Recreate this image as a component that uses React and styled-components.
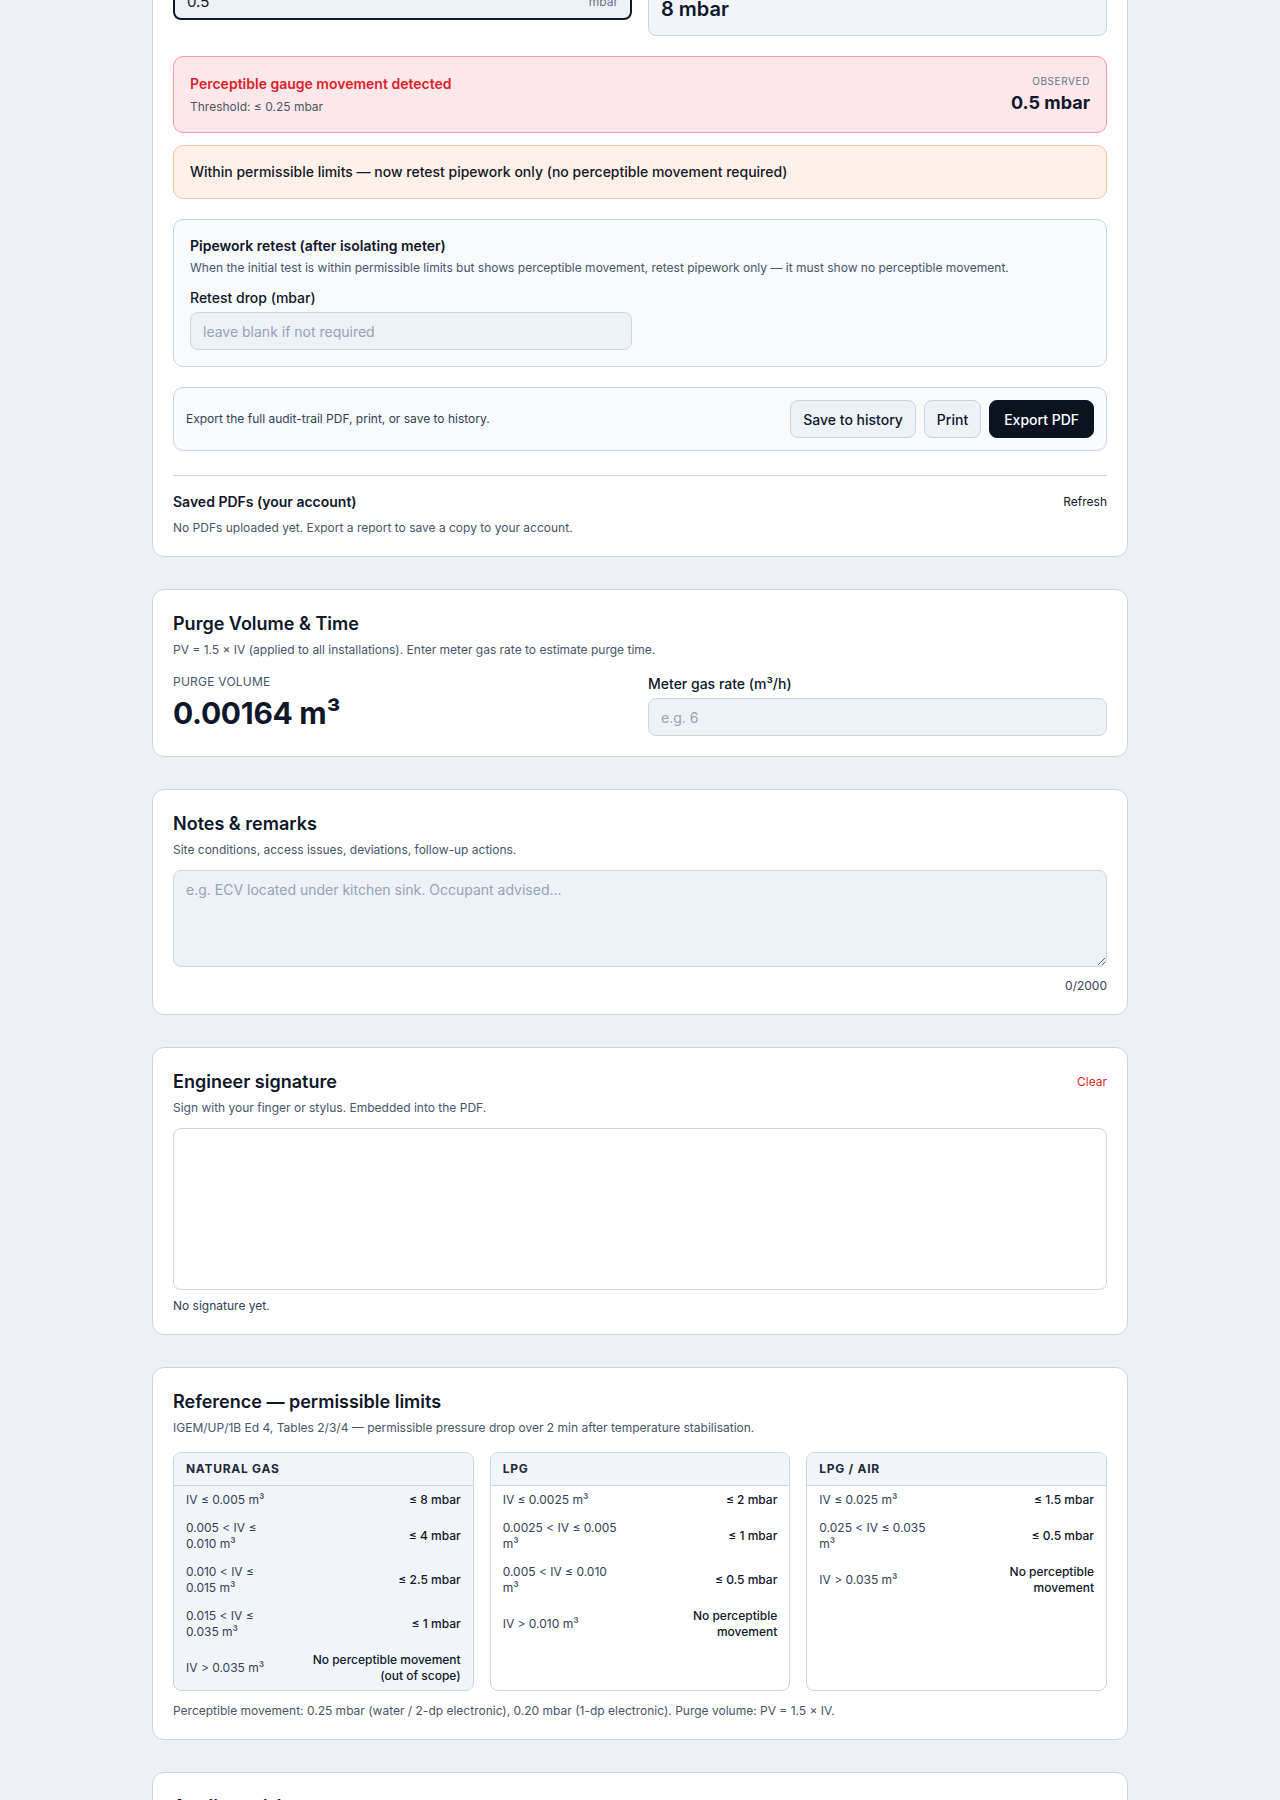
import React from 'react';
import styled, { createGlobalStyle, css } from 'styled-components';

const GlobalStyle = createGlobalStyle`
  *, *::before, *::after { box-sizing: border-box; }
  html { overflow: hidden; }
  html, body { margin: 0; padding: 0; }
  body {
    background: #edf1f7;
    color: #0f172a;
    font-family: Inter, "Noto Sans", "Liberation Sans", Arial, sans-serif;
    -webkit-font-smoothing: antialiased;
  }
  button, input, textarea { font-family: inherit; }
`;

/* ---------- page + cards ---------- */

const Page = styled.main`
  width: 976px;
  margin: -163px auto 0;
  padding: 32px 0;
  display: flex;
  flex-direction: column;
  gap: 32px;
`;

const Card = styled.section`
  background: #ffffff;
  border: 1px solid #cbd5e1;
  border-radius: 12px;
  padding: 20px;
  display: flex;
  flex-direction: column;
  gap: ${(p) => p.$gap || 0}px;
`;

const CardHeader = styled.header`
  display: flex;
  justify-content: space-between;
  align-items: flex-start;
  gap: 16px;
`;

const CardTitle = styled.h2`
  margin: 0;
  font-size: 18px;
  line-height: 28px;
  font-weight: 600;
  color: #0f172a;
`;

const CardSub = styled.p`
  margin: 4px 0 0;
  font-size: 12px;
  line-height: 16px;
  color: #475569;
`;

const LinkAction = styled.button`
  border: 0;
  background: none;
  padding: 0;
  cursor: pointer;
  font-size: 12px;
  line-height: ${(p) => p.$lh || 16}px;
  margin-top: ${(p) => p.$mt || 0}px;
  color: ${(p) => (p.$danger ? '#dc2626' : '#0f172a')};
`;

/* ---------- form parts ---------- */

const TwoCol = styled.div`
  display: grid;
  grid-template-columns: 1fr 1fr;
  gap: 16px;
  align-items: start;
  margin-top: ${(p) => p.$mt || 0}px;
`;

const Field = styled.label`
  display: flex;
  flex-direction: column;
  gap: 4px;
`;

const FieldLabel = styled.span`
  font-size: 14px;
  line-height: 20px;
  font-weight: 500;
  color: #0f172a;
`;

const TextInput = styled.input`
  height: 38px;
  width: 100%;
  padding: 0 12px;
  border: 1px solid #cbd5e1;
  border-radius: 8px;
  background: #edf1f8;
  font-size: 14px;
  color: #0f172a;
  outline: none;
  &::placeholder { color: #94a3b8; }
`;

const UnitInputWrap = styled.div`
  height: 38px;
  display: flex;
  align-items: center;
  padding: 0 12px;
  border-radius: 8px;
  background: #edf1f8;
  border: ${(p) => (p.$focused ? '2px solid #111827' : '1px solid #cbd5e1')};
`;

const UnitInputField = styled.input`
  flex: 1;
  min-width: 0;
  border: 0;
  background: transparent;
  padding: 0;
  font-size: 15px;
  color: #0f172a;
  outline: none;
`;

const Unit = styled.span`
  font-size: 12px;
  color: #64748b;
`;

const StatBox = styled.div`
  border: 1px solid #cbd5e1;
  border-radius: 8px;
  background: #f1f5f9;
  padding: 12px;
  font-size: 20px;
  line-height: 28px;
  font-weight: 600;
  color: #0f172a;
`;

/* ---------- alerts ---------- */

const AlertGroup = styled.div`
  display: flex;
  flex-direction: column;
  gap: 12px;
`;

const toneStyles = {
  danger: css`
    background: #fde7ea;
    border-color: #f59ca4;
  `,
  warn: css`
    background: #fff1e7;
    border-color: #fcc39a;
  `,
};

const Alert = styled.div`
  display: flex;
  justify-content: space-between;
  align-items: center;
  gap: 16px;
  padding: 16px;
  border: 1px solid;
  border-radius: 10px;
  ${(p) => toneStyles[p.$tone]}
`;

const AlertTitle = styled.div`
  font-size: 14px;
  line-height: 21px;
  font-weight: 600;
  color: #dc1f2a;
`;

const AlertMeta = styled.div`
  margin-top: 4px;
  font-size: 12px;
  line-height: 18px;
  color: #4b5563;
`;

const AlertText = styled.div`
  font-size: 14px;
  line-height: 20px;
  font-weight: 500;
  color: #111827;
`;

const Observed = styled.div`
  text-align: right;
`;

const Kicker = styled.div`
  font-size: ${(p) => p.$size || 12}px;
  line-height: ${(p) => p.$lh || 16}px;
  letter-spacing: ${(p) => p.$track || 0.02}em;
  text-transform: uppercase;
  color: ${(p) => p.$color || '#475569'};
  font-weight: ${(p) => p.$weight || 400};
`;

const ObservedValue = styled.div`
  margin-top: 2px;
  font-size: 18px;
  line-height: 26px;
  font-weight: 700;
  color: #0f172a;
`;

/* ---------- pipework retest panel ---------- */

const Panel = styled.div`
  background: #f8fafc;
  border: 1px solid #cbd5e1;
  border-radius: 10px;
  padding: 16px;
`;

const PanelTitle = styled.h3`
  margin: 0;
  font-size: 14px;
  line-height: 20px;
  font-weight: 600;
  color: #0f172a;
`;

/* ---------- export bar ---------- */

const ActionBar = styled.div`
  display: flex;
  align-items: center;
  justify-content: space-between;
  gap: 16px;
  padding: 12px;
  background: #f8fafc;
  border: 1px solid #cbd5e1;
  border-radius: 10px;
`;

const ActionHint = styled.span`
  font-size: 12px;
  line-height: 16px;
  color: #334155;
`;

const ButtonRow = styled.div`
  display: flex;
  gap: 8px;
`;

const Button = styled.button`
  height: 38px;
  padding: 0 ${(p) => (p.$primary ? 14 : 12)}px;
  border-radius: 8px;
  font-size: 14px;
  font-weight: 500;
  cursor: pointer;
  border: 1px solid ${(p) => (p.$primary ? '#0b1220' : '#c9d3df')};
  background: ${(p) => (p.$primary ? '#0b1220' : '#edf1f8')};
  color: ${(p) => (p.$primary ? '#ffffff' : '#0f172a')};
`;

/* ---------- saved PDFs ---------- */

const SavedSection = styled.div`
  margin-top: 4px;
  padding-top: 16px;
  border-top: 1px solid #cbd5e1;
`;

const SubHeading = styled.h3`
  margin: 0;
  font-size: 14px;
  line-height: 20px;
  font-weight: 600;
  color: #0f172a;
`;

const Note = styled.p`
  margin: ${(p) => p.$mt || 0}px 0 0;
  font-size: 12px;
  line-height: 16px;
  color: ${(p) => p.$color || '#475569'};
  text-align: ${(p) => p.$align || 'left'};
`;

/* ---------- purge ---------- */

const BigValue = styled.div`
  margin-top: 3px;
  font-size: 30px;
  line-height: 40px;
  font-weight: 700;
  letter-spacing: -0.01em;
  color: #0f172a;
`;

/* ---------- notes ---------- */

const NotesArea = styled.textarea`
  display: block;
  width: 100%;
  height: 97px;
  margin-top: 12px;
  padding: 9px 12px;
  border: 1px solid #cbd5e1;
  border-radius: 8px;
  background: #edf1f8;
  font-size: 14px;
  line-height: 20px;
  color: #0f172a;
  resize: vertical;
  outline: none;
  &::placeholder { color: #94a3b8; }
`;

/* ---------- signature ---------- */

const SignaturePad = styled.div`
  margin-top: 12px;
  height: 162px;
  background: #ffffff;
  border: 1px solid #cbd5e1;
  border-radius: 8px;
`;

/* ---------- reference tables ---------- */

const LimitGrid = styled.div`
  margin-top: 16px;
  display: grid;
  grid-template-columns: repeat(3, 1fr);
  gap: 16px;
`;

const LimitCard = styled.div`
  border: 1px solid #cbd5e1;
  border-radius: 8px;
  overflow: hidden;
  background: ${(p) => (p.$active ? '#f1f5f9' : '#ffffff')};
`;

const LimitHead = styled.div`
  padding: 8px 12px;
  background: #f1f5f9;
  border-bottom: 1px solid #cbd5e1;
  font-size: 12px;
  line-height: 16px;
  font-weight: 700;
  letter-spacing: 0.06em;
  text-transform: uppercase;
  color: #1e293b;
`;

const LimitTable = styled.table`
  width: 100%;
  border-collapse: collapse;
  font-size: 12px;
  line-height: 16px;
`;

const RangeCell = styled.td`
  padding: 6px 12px;
  vertical-align: middle;
  color: #334155;
`;

const LimitCell = styled.td`
  padding: 6px 12px;
  vertical-align: middle;
  text-align: right;
  font-weight: 500;
  color: #0f172a;
`;

/* ---------- data ---------- */

const LIMITS = [
  {
    gas: 'Natural gas',
    active: true,
    rows: [
      ['IV ≤ 0.005 m³', '≤ 8 mbar'],
      ['0.005 < IV ≤ 0.010 m³', '≤ 4 mbar'],
      ['0.010 < IV ≤ 0.015 m³', '≤ 2.5 mbar'],
      ['0.015 < IV ≤ 0.035 m³', '≤ 1 mbar'],
      ['IV > 0.035 m³', 'No perceptible movement (out of scope)'],
    ],
  },
  {
    gas: 'LPG',
    rows: [
      ['IV ≤ 0.0025 m³', '≤ 2 mbar'],
      ['0.0025 < IV ≤ 0.005 m³', '≤ 1 mbar'],
      ['0.005 < IV ≤ 0.010 m³', '≤ 0.5 mbar'],
      ['IV > 0.010 m³', 'No perceptible movement'],
    ],
  },
  {
    gas: 'LPG / Air',
    rows: [
      ['IV ≤ 0.025 m³', '≤ 1.5 mbar'],
      ['0.025 < IV ≤ 0.035 m³', '≤ 0.5 mbar'],
      ['IV > 0.035 m³', 'No perceptible movement'],
    ],
  },
];

export default function App() {
  return (
    <>
      <GlobalStyle />
      <Page>
        {/* Tightness test */}
        <Card $gap={20}>
          <CardHeader>
            <div>
              <CardTitle>Tightness test</CardTitle>
              <CardSub>Record the pressure drop over 2 minutes after temperature stabilisation.</CardSub>
            </div>
          </CardHeader>

          <TwoCol>
            <Field>
              <FieldLabel>Pressure drop (mbar)</FieldLabel>
              <UnitInputWrap $focused>
                <UnitInputField defaultValue="0.5" />
                <Unit>mbar</Unit>
              </UnitInputWrap>
            </Field>
            <Field as="div">
              <FieldLabel>Permissible drop</FieldLabel>
              <StatBox>8 mbar</StatBox>
            </Field>
          </TwoCol>

          <AlertGroup>
            <Alert $tone="danger">
              <div>
                <AlertTitle>Perceptible gauge movement detected</AlertTitle>
                <AlertMeta>Threshold: ≤ 0.25 mbar</AlertMeta>
              </div>
              <Observed>
                <Kicker $size={10} $lh={14} $track={0.06} $color="#64748b">
                  Observed
                </Kicker>
                <ObservedValue>0.5 mbar</ObservedValue>
              </Observed>
            </Alert>
            <Alert $tone="warn">
              <AlertText>
                Within permissible limits — now retest pipework only (no perceptible movement required)
              </AlertText>
            </Alert>
          </AlertGroup>

          <Panel>
            <PanelTitle>Pipework retest (after isolating meter)</PanelTitle>
            <CardSub>
              When the initial test is within permissible limits but shows perceptible movement, retest
              pipework only — it must show no perceptible movement.
            </CardSub>
            <TwoCol $mt={12}>
              <Field>
                <FieldLabel>Retest drop (mbar)</FieldLabel>
                <TextInput placeholder="leave blank if not required" />
              </Field>
            </TwoCol>
          </Panel>

          <ActionBar>
            <ActionHint>Export the full audit-trail PDF, print, or save to history.</ActionHint>
            <ButtonRow>
              <Button>Save to history</Button>
              <Button>Print</Button>
              <Button $primary>Export PDF</Button>
            </ButtonRow>
          </ActionBar>

          <SavedSection>
            <CardHeader>
              <SubHeading>Saved PDFs (your account)</SubHeading>
              <LinkAction $lh={20}>Refresh</LinkAction>
            </CardHeader>
            <Note $mt={8}>No PDFs uploaded yet. Export a report to save a copy to your account.</Note>
          </SavedSection>
        </Card>

        {/* Purge */}
        <Card>
          <CardHeader>
            <div>
              <CardTitle>Purge Volume &amp; Time</CardTitle>
              <CardSub>PV = 1.5 × IV (applied to all installations). Enter meter gas rate to estimate purge time.</CardSub>
            </div>
          </CardHeader>
          <TwoCol $mt={16}>
            <div>
              <Kicker>Purge volume</Kicker>
              <BigValue>0.00164 m³</BigValue>
            </div>
            <Field>
              <FieldLabel>Meter gas rate (m³/h)</FieldLabel>
              <TextInput placeholder="e.g. 6" />
            </Field>
          </TwoCol>
        </Card>

        {/* Notes */}
        <Card>
          <CardHeader>
            <div>
              <CardTitle>Notes &amp; remarks</CardTitle>
              <CardSub>Site conditions, access issues, deviations, follow-up actions.</CardSub>
            </div>
          </CardHeader>
          <NotesArea placeholder="e.g. ECV located under kitchen sink. Occupant advised..." />
          <Note $mt={11} $align="right" $color="#334155">0/2000</Note>
        </Card>

        {/* Signature */}
        <Card>
          <CardHeader>
            <div>
              <CardTitle>Engineer signature</CardTitle>
              <CardSub>Sign with your finger or stylus. Embedded into the PDF.</CardSub>
            </div>
            <LinkAction $danger $mt={6}>Clear</LinkAction>
          </CardHeader>
          <SignaturePad />
          <Note $mt={8} $color="#334155">No signature yet.</Note>
        </Card>

        {/* Reference tables */}
        <Card>
          <CardHeader>
            <div>
              <CardTitle>Reference — permissible limits</CardTitle>
              <CardSub>
                IGEM/UP/1B Ed 4, Tables 2/3/4 — permissible pressure drop over 2 min after temperature stabilisation.
              </CardSub>
            </div>
          </CardHeader>
          <LimitGrid>
            {LIMITS.map((t) => (
              <LimitCard key={t.gas} $active={t.active}>
                <LimitHead>{t.gas}</LimitHead>
                <LimitTable>
                  <tbody>
                    {t.rows.map(([range, limit]) => (
                      <tr key={range}>
                        <RangeCell>{range}</RangeCell>
                        <LimitCell>{limit}</LimitCell>
                      </tr>
                    ))}
                  </tbody>
                </LimitTable>
              </LimitCard>
            ))}
          </LimitGrid>
          <Note $mt={12}>
            Perceptible movement: 0.25 mbar (water / 2-dp electronic), 0.20 mbar (1-dp electronic). Purge volume: PV = 1.5 × IV.
          </Note>
        </Card>

        {/* Appliances */}
        <Card>
          <CardHeader>
            <div>
              <CardTitle>Appliance(s)</CardTitle>
              <CardSub>Appliances tested and their operating pressures.</CardSub>
            </div>
          </CardHeader>
        </Card>
      </Page>
    </>
  );
}
